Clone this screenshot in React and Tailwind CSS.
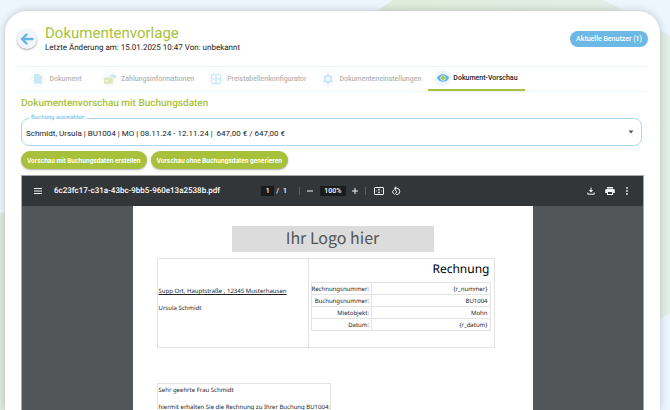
// App.jsx
// Document template page with the PDF preview tab open

import React, { useState } from 'react';

const TABS = [
  { id: 'document', label: 'Dokument', Icon: DocumentIcon },
  { id: 'payment', label: 'Zahlungsinformationen', Icon: PaymentIcon },
  { id: 'prices', label: 'Preistabellenkonfigurator', Icon: GridIcon },
  { id: 'settings', label: 'Dokumenteneinstellungen', Icon: GearIcon },
  { id: 'preview', label: 'Dokument-Vorschau', Icon: EyeIcon },
];

const INVOICE_FIELDS = [
  ['Rechnungsnummer:', '{r_nummer}'],
  ['Buchungsnummer:', 'BU1004'],
  ['Mietobjekt:', 'Mohn'],
  ['Datum:', '{r_datum}'],
];

function DocumentIcon() {
  return (
    <svg viewBox="0 0 12 12" className="w-3 h-3">
      <path d="M2 1h5l3 3v6.500H2z" fill="#6fbfe8" />
      <path d="M7 1l3 3H7z" fill="#a7c23a" />
    </svg>
  );
}

function PaymentIcon() {
  return (
    <svg viewBox="0 0 12 12" className="w-3 h-3">
      <rect x="0" y="4.500" width="9" height="6.500" rx="1" fill="#a7c23a" />
      <path d="M1.500 7.800h2" stroke="#fff" strokeWidth="0.800" />
      <path d="M5.500 3.500C6 1.800 7.500 1.300 9 1.500V0.500l3 2.500v2.500h-1.800L9 4z" fill="#6fbfe8" />
    </svg>
  );
}

function GridIcon() {
  return (
    <svg viewBox="0 0 12 12" className="w-3 h-3" fill="none" stroke="#6fbfe8" strokeWidth="1.200">
      <rect x="1.500" y="1.500" width="9" height="9" rx="1" />
      <path d="M6 1.500v9M1.500 6h9" />
    </svg>
  );
}

function GearIcon() {
  return (
    <svg viewBox="0 0 12 12" className="w-3 h-3">
      <circle cx="6" cy="6" r="2.900" fill="none" stroke="#6fbfe8" strokeWidth="2" />
      <path
        d="M6 0.800v1.800M6 9.400v1.800M1.500 3.400l1.600.9M8.900 7.700l1.600.9M1.500 8.600l1.600-.9M8.900 4.300l1.600-.9"
        stroke="#6fbfe8"
        strokeWidth="2"
      />
    </svg>
  );
}

function EyeIcon() {
  return (
    <svg viewBox="0 0 12 12" className="w-3 h-3">
      <path d="M0 6C1.500 3.300 3.600 2.200 6 2.200S10.500 3.300 12 6C10.500 8.700 8.400 9.800 6 9.800S1.500 8.700 0 6z" fill="#5fb4e3" />
      <circle cx="6" cy="6" r="2.600" fill="#fff" />
      <circle cx="6" cy="6" r="2" fill="#a7c23a" />
    </svg>
  );
}

function Background() {
  return (
    <svg
      className="absolute inset-0 w-full h-full"
      viewBox="0 0 670 410"
      preserveAspectRatio="none"
      aria-hidden="true"
    >
      <defs>
        <linearGradient id="blob" x1="0" y1="0" x2="1" y2="0">
          <stop offset="0" stopColor="#deecd7" />
          <stop offset="1" stopColor="#e4eee9" />
        </linearGradient>
      </defs>
      <path d="M340 40C360 20 376 12 393 0H603C620 8 645 22 670 36V314C640 330 600 340 560 350H340z" fill="url(#blob)" />
      <path d="M0 213C8 211 20 210 40 210V410H0z" fill="#dfebe0" />
    </svg>
  );
}

function Header() {
  return (
    <header className="flex items-center justify-between px-3">
      <div className="flex items-center gap-2">
        <button
          aria-label="Zurück"
          className="w-5 h-5 rounded-full bg-[#f1f6fc] shadow-[0_1px_2px_rgba(0,0,0,0.35)] flex items-center justify-center"
        >
          <svg viewBox="0 0 14 12" className="w-3.5 h-3" fill="none" stroke="#64b5e4" strokeWidth="2.400">
            <path d="M12.500 6H2.500M6.500 1.500L2 6l4.500 4.500" strokeLinejoin="round" strokeLinecap="round" />
          </svg>
        </button>
        <div>
          <h1 className="text-[15px] leading-[18px] text-[#a7c23a]">Dokumentenvorlage</h1>
          <p className="text-[8px] leading-[12px] text-[#222]">
            Letzte Änderung am: 15.01.2025 10:47 Von: unbekannt
          </p>
        </div>
      </div>
      <button className="h-4 px-1.5 rounded-full bg-[#6bb9e4] text-white text-[7px] leading-[16px] font-medium">
        Aktuelle Benutzer (1)
      </button>
    </header>
  );
}

function Tabs({ active, onSelect }) {
  return (
    <nav className="mx-3 mt-3 h-[26px] flex items-stretch border-y border-[#ebf5fd]" role="tablist">
      {TABS.map(({ id, label, Icon }) => {
        const isActive = id === active;
        return (
          <button
            key={id}
            role="tab"
            aria-selected={isActive}
            onClick={() => onSelect(id)}
            className={
              isActive
                ? 'min-w-[78px] flex items-center justify-center gap-0.5 px-[7px] text-[7px] font-medium whitespace-nowrap text-[#222] border-b-2 border-[#a7c23a]'
                : 'min-w-[78px] flex items-center justify-center gap-[3px] px-[7px] text-[7px] font-medium whitespace-nowrap text-[#222] opacity-35'
            }
          >
            <span className="w-4 h-4 rounded-full bg-[#eef6fd] flex items-center justify-center">
              <Icon />
            </span>
            {label}
          </button>
        );
      })}
    </nav>
  );
}

function BookingSelect() {
  return (
    <div className="relative mr-0.5 mt-[7px]">
      <label htmlFor="booking" className="absolute left-2 -top-1 px-0.5 bg-white text-[6px] leading-[8px] text-[#64b5e4]">
        Buchung auswählen
      </label>
      <select
        id="booking"
        className="block w-full h-7 pl-1 pt-1 appearance-none rounded-lg border border-[#a9d7f2] bg-white text-[8px] text-[#222]"
      >
        <option>Schmidt, Ursula | BU1004 | MO | 08.11.24 - 12.11.24 |&nbsp; 647,00 € / 647,00 €</option>
      </select>
      <svg viewBox="0 0 6 4" className="absolute right-2 top-3 w-1.5 h-1 pointer-events-none">
        <path d="M0.500 0.500h5L3 3.500z" fill="#555" />
      </svg>
    </div>
  );
}

function ViewerToolbar({ fileName }) {
  return (
    <div className="h-[30px] shrink-0 px-3 grid grid-cols-[1fr_auto_1fr] items-center bg-[#323639] text-white text-[7px] font-medium">
      <div className="flex items-center gap-3">
        <button aria-label="Menü">
          <svg viewBox="0 0 8 8" className="w-2 h-2" stroke="#f1f1f1" strokeWidth="1">
            <path d="M0 1.500h8M0 4h8M0 6.500h8" />
          </svg>
        </button>
        <span className="text-[8px]">{fileName}</span>
      </div>

      <div className="flex items-center pr-[3px]">
        <input aria-label="Seite" defaultValue="1" className="w-[13px] h-[10px] bg-[#191b1c] text-center" />
        <span className="pl-0.5">/</span>
        <span className="pl-1">1</span>
        <span className="w-px h-2 ml-3 mr-[7px] bg-[#5f6265]" />
        <button aria-label="Verkleinern">
          <svg viewBox="0 0 6 6" className="w-1.5 h-1.5" stroke="#f1f1f1">
            <path d="M0 3h6" />
          </svg>
        </button>
        <input aria-label="Zoom" defaultValue="100%" className="w-[26px] h-[10px] ml-[7px] mr-1.5 bg-[#191b1c] text-center" />
        <button aria-label="Vergrößern">
          <svg viewBox="0 0 6 6" className="w-1.5 h-1.5" stroke="#f1f1f1">
            <path d="M0 3h6M3 0v6" />
          </svg>
        </button>
        <span className="w-px h-2 ml-[7px] mr-2 bg-[#5f6265]" />
        <button aria-label="An Seite anpassen">
          <svg viewBox="0 0 10 8" className="w-2.5 h-2" fill="none" stroke="#f1f1f1">
            <rect x="0.500" y="0.500" width="9" height="7" rx="0.500" />
            <path d="M5 1.400L6.300 3H3.700zM5 6.600L6.300 5H3.700z" fill="#f1f1f1" stroke="none" />
            <path d="M2 4h1M7 4h1M5 3v2" strokeWidth="0.600" />
          </svg>
        </button>
        <button aria-label="Drehen" className="ml-[7px]">
          <svg viewBox="0 0 10 10" className="w-2.5 h-2.5" fill="none" stroke="#f1f1f1">
            <path d="M4.500 2.200h1.300a3.200 3.200 0 1 1-0.500 6.400" />
            <path d="M5.200 0.300v3.800L3 2.200z" fill="#f1f1f1" stroke="none" />
            <path d="M3.500 3.500L6 5.900 3.500 8.200 1 5.900z" strokeWidth="0.900" />
          </svg>
        </button>
      </div>

      <div className="flex items-center justify-end gap-2">
        <button aria-label="Herunterladen" className="mr-0.5">
          <svg viewBox="0 0 8 8" className="w-2 h-2" fill="none" stroke="#f1f1f1">
            <path d="M4 0.500v4M0.800 5.500v1.700h6.400V5.500" />
            <path d="M1.800 3h4.400L4 5.500z" fill="#f1f1f1" stroke="none" />
          </svg>
        </button>
        <button aria-label="Drucken">
          <svg viewBox="0 0 10 8" className="w-2.5 h-2">
            <path d="M2 0h6v1.500H2zM1.500 2h7a1.300 1.300 0 0 1 1.300 1.300V6H8v2H2V6H0.200V3.300A1.300 1.300 0 0 1 1.500 2z" fill="#f1f1f1" />
            <path d="M3 5h4v2H3z" fill="#323639" />
          </svg>
        </button>
        <button aria-label="Weitere Aktionen">
          <svg viewBox="0 0 8 8" className="w-2 h-2" fill="#f1f1f1">
            <circle cx="4" cy="1" r="0.900" />
            <circle cx="4" cy="4" r="0.900" />
            <circle cx="4" cy="7" r="0.900" />
          </svg>
        </button>
      </div>
    </div>
  );
}

function InvoicePage() {
  return (
    <article className="w-full max-w-[400px] flex-1 mx-auto pt-5 bg-white text-[#222] text-[6px] leading-[8px] font-['Noto_Sans','Open_Sans',sans-serif]">
      <div className="mx-auto w-[202px] h-[26px] bg-[#dcdcdc] text-[#555] text-[16px] leading-[23px] text-center font-['Noto_Sans_CJK_SC','Noto_Sans',sans-serif]">
        Ihr Logo hier
      </div>

      <div className="mt-1.5 ml-6 mr-[38px] h-[90px] flex border border-[#e3e3e3]">
        <div className="flex-1 pl-px pt-7 border-r border-[#e3e3e3]">
          <p className="underline">Supp Ort, Hauptstraße , 12345 Musterhausen</p>
          <p className="mt-[9px]">Ursula Schmidt</p>
        </div>
        <div className="w-[185px] pl-0.5 pr-[3px]">
          <h2 className="pr-px pt-px text-[12px] leading-[18px] text-right text-black">Rechnung</h2>
          <table className="mt-1 w-full border-collapse text-right">
            <tbody>
              {INVOICE_FIELDS.map(([label, value]) => (
                <tr key={label} className="h-3">
                  <th className="w-[60px] pr-0.5 border border-[#e3e3e3] font-normal text-right">{label}</th>
                  <td className="pr-0.5 border border-[#e3e3e3]">{value}</td>
                </tr>
              ))}
            </tbody>
          </table>
        </div>
      </div>

      <div className="mt-[35px] ml-6 w-[174px] pl-px pt-0.5 border border-[#e3e3e3] whitespace-nowrap">
        <p>Sehr geehrte Frau Schmidt</p>
        <p className="mt-[9px]">hiermit erhalten Sie die Rechnung zu Ihrer Buchung BU1004:</p>
      </div>
    </article>
  );
}

export default function App() {
  const [activeTab, setActiveTab] = useState('preview');

  return (
    <div className="relative h-screen overflow-hidden bg-[#edf5fd] font-['Roboto',sans-serif] [text-rendering:geometricPrecision]">
      <Background />

      <main className="relative h-full pt-[11px] pl-[5px] pr-2.5">
        <div className="h-full flex flex-col pt-[13px] rounded-t-[22px] bg-white shadow-[0_0_8px_rgba(0,0,0,0.2)]">
          <Header />
          <Tabs active={activeTab} onSelect={setActiveTab} />

          <section className="flex-1 min-h-0 flex flex-col px-4 pt-1">
            <h2 className="text-[10px] leading-[15px] font-medium text-[#a7c23a]">
              Dokumentenvorschau mit Buchungsdaten
            </h2>
            <BookingSelect />
            <div className="mt-[5px] flex gap-1 text-[6px] font-bold text-white font-['Inter','Roboto',sans-serif]">
              <button className="h-[18px] px-1.5 rounded-full bg-[#a7c23a] shadow-[0_1px_2px_rgba(0,0,0,0.3)]">
                Vorschau mit Buchungsdaten erstellen
              </button>
              <button className="h-[18px] px-1.5 rounded-full bg-[#a7c23a] shadow-[0_1px_2px_rgba(0,0,0,0.3)]">
                Vorschau ohne Buchungsdaten generieren
              </button>
            </div>

            <div className="mt-1.5 flex-1 min-h-0 flex flex-col overflow-hidden border border-b-0 border-[#a5a7a8] bg-[#525659]">
              <ViewerToolbar fileName="6c23fc17-c31a-43bc-9bb5-960e13a2538b.pdf" />
              <InvoicePage />
            </div>
          </section>
        </div>
      </main>
    </div>
  );
}
